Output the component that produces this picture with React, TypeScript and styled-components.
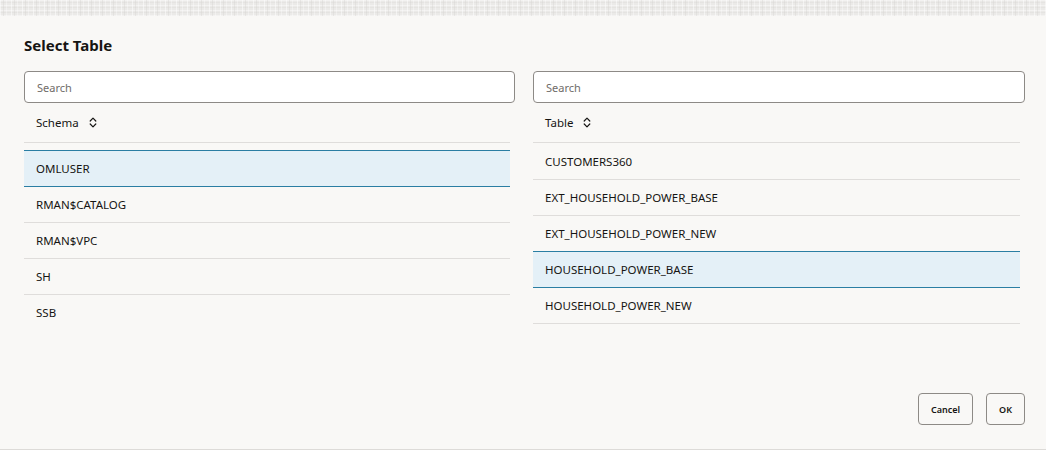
import React from "react";
import styled, { createGlobalStyle } from "styled-components";

const GlobalStyle = createGlobalStyle`
  html, body { margin: 0; padding: 0; background: #f9f8f6; }
  body { font-family: "Noto Sans", "Open Sans", sans-serif; color: #161513; }
  * { box-sizing: border-box; }
`;

const Dialog = styled.div`
  height: 450px;
  display: flex;
  flex-direction: column;
  background: #f9f8f6;
  border-bottom: 1px solid #dddbd8;
`;

const Backdrop = styled.div`
  height: 16px;
  flex: none;
  background-color: #ebeae8;
  background-image:
    repeating-linear-gradient(90deg, rgba(255,255,255,0.5) 0 1px, transparent 1px 3px, rgba(210,208,205,0.35) 3px 4px, transparent 4px 6px, rgba(255,255,255,0.35) 6px 7px, transparent 7px 11px),
    repeating-linear-gradient(0deg, rgba(255,255,255,0.4) 0 1px, transparent 1px 3px, rgba(215,213,210,0.3) 3px 4px, transparent 4px 5px);
`;

const Body = styled.div`
  flex: 1;
  padding: 19px 21px 0 24px;
  display: flex;
  flex-direction: column;
`;

const Title = styled.h1`
  margin: 0 0 16px;
  font-size: 15px;
  line-height: 20px;
  font-weight: 700;
  color: #161513;
`;

const Columns = styled.div`
  display: grid;
  grid-template-columns: 491px 1fr;
  column-gap: 18px;
`;

const Panel = styled.div`
  display: flex;
  flex-direction: column;
  min-width: 0;
`;

const SearchBox = styled.input`
  height: 32px;
  width: 100%;
  border: 1px solid #8d8a86;
  border-radius: 4px;
  background: #ffffff;
  padding: 0 12px;
  font-family: "Noto Sans", "Open Sans", sans-serif;
  font-size: 11px;
  color: #161513;
  outline: none;
  &::placeholder { color: #6f6c69; }
`;

const ListArea = styled.div`
  margin-right: 5px;
`;

const HeaderCell = styled.div`
  height: 40px;
  display: flex;
  align-items: center;
  gap: 10px;
  padding-left: 12px;
  border-bottom: 1px solid #dfdddb;
  font-size: 11.5px;
  color: #161513;
`;

const List = styled.div<{ $offset: number; $hideLastLine?: boolean }>`
  padding-top: ${(p) => p.$offset}px;
  ${(p) => (p.$hideLastLine ? "& > div:last-child { border-bottom-color: transparent; }" : "")}
`;

const Row = styled.div<{ $selected?: boolean }>`
  height: 36px;
  display: flex;
  align-items: center;
  padding-left: 12px;
  font-size: 11.5px;
  color: #161513;
  border-bottom: 1px solid ${(p) => (p.$selected ? "#2a7ea3" : "#dfdddb")};
  background: ${(p) => (p.$selected ? "#e4f0f7" : "transparent")};
  box-shadow: ${(p) => (p.$selected ? "0 -1px 0 #2a7ea3" : "none")};
`;

const Footer = styled.div`
  display: flex;
  justify-content: flex-end;
  gap: 13px;
  padding: 0 21px 24px;
`;

const Button = styled.button`
  height: 32px;
  padding: 0 12px;
  border: 1px solid #8d8a86;
  border-radius: 4px;
  background: transparent;
  font-family: "Noto Sans", "Open Sans", sans-serif;
  font-size: 9px;
  font-weight: 600;
  color: #161513;
`;

const SortIcon = () => (
  <svg width="8" height="11" viewBox="0 0 8 11" fill="none" stroke="#161513" strokeWidth="1.2" strokeLinecap="round" strokeLinejoin="round">
    <path d="M1.2 4 L4 1.2 L6.8 4" />
    <path d="M1.2 7 L4 9.8 L6.8 7" />
  </svg>
);

type TableListProps = {
  heading: string;
  items: string[];
  selected: string;
  offset: number;
  hideLastLine?: boolean;
};

const TableList = ({ heading, items, selected, offset, hideLastLine }: TableListProps) => (
  <Panel>
    <SearchBox placeholder="Search" />
    <ListArea>
      <HeaderCell>
        <span>{heading}</span>
        <SortIcon />
      </HeaderCell>
      <List $offset={offset} $hideLastLine={hideLastLine}>
        {items.map((item) => (
          <Row key={item} $selected={item === selected}>
            {item}
          </Row>
        ))}
      </List>
    </ListArea>
  </Panel>
);

const schemas = ["OMLUSER", "RMAN$CATALOG", "RMAN$VPC", "SH", "SSB"];
const tables = [
  "CUSTOMERS360",
  "EXT_HOUSEHOLD_POWER_BASE",
  "EXT_HOUSEHOLD_POWER_NEW",
  "HOUSEHOLD_POWER_BASE",
  "HOUSEHOLD_POWER_NEW",
];

export default function App() {
  return (
    <>
      <GlobalStyle />
      <Dialog>
        <Backdrop />
        <Body>
          <Title>Select Table</Title>
          <Columns>
            <TableList heading="Schema" items={schemas} selected="OMLUSER" offset={8} hideLastLine />
            <TableList heading="Table" items={tables} selected="HOUSEHOLD_POWER_BASE" offset={1} />
          </Columns>
        </Body>
        <Footer>
          <Button>Cancel</Button>
          <Button>OK</Button>
        </Footer>
      </Dialog>
    </>
  );
}
